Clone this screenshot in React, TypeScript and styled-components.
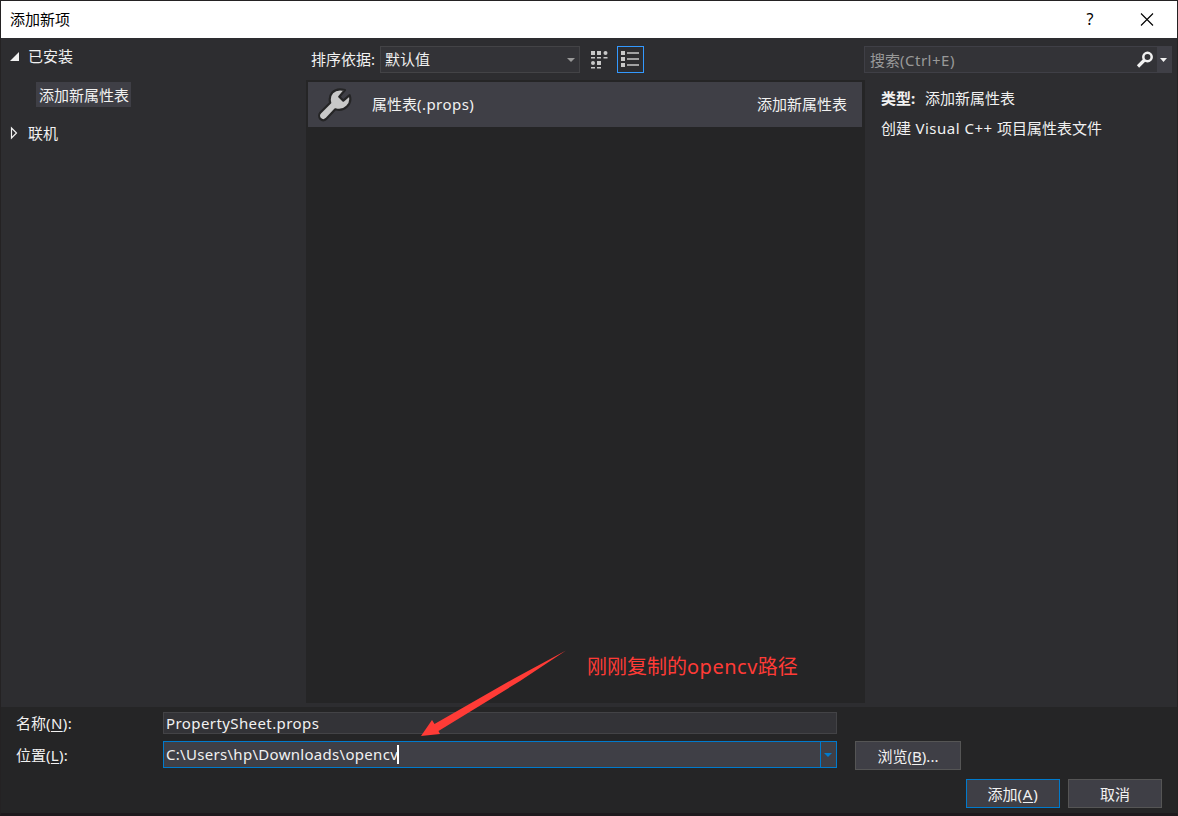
import React from "react";
import styled, { createGlobalStyle } from "styled-components";

const GlobalStyle = createGlobalStyle`
  * { box-sizing: border-box; }
  body {
    margin: 0;
    background: #1f1b1e;
    color: #f1f1f1;
    font-family: "Noto Sans", "Noto Sans CJK SC", sans-serif;
    font-size: 15px;
    line-height: 20px;
    overflow: hidden;
  }
  button, input { font: inherit; color: inherit; }
`;

const Window = styled.div`
  width: 1178px;
  height: 816px;
  display: flex;
  flex-direction: column;
  border: 1px solid #242223;
  border-bottom: 3px solid #1e1a1d;
  background: #2d2d30;
  position: relative;
`;

const TitleBar = styled.header`
  height: 37px;
  flex: none;
  display: flex;
  align-items: center;
  padding: 0 23px 0 9px;
  background: #fff;
  color: #000;
`;

const Title = styled.h1`
  flex: 1;
  margin: 0 0 2px;
  font-size: 15px;
  font-weight: 400;
  line-height: 20px;
`;

const HelpMark = styled.span`
  width: 10px;
  margin: 0 45px 2px 0;
  font-size: 16px;
  text-align: center;
`;

const Body = styled.main`
  height: 669px;
  flex: none;
  display: grid;
  grid-template-columns: 305px 559px 1fr;
`;

const Tree = styled.nav`
  display: flex;
  flex-direction: column;
  padding-top: 8px;
`;

const TreeRow = styled.div`
  height: 20px;
  display: flex;
  align-items: center;
  padding-left: 8px;
  gap: 6px;
`;

const TreeArrow = styled.svg`
  width: 13px;
  height: 14px;
  flex: none;
`;

const TreeItem = styled.div`
  width: 95px;
  height: 25px;
  margin: 16px 0 16px 35px;
  padding-left: 3px;
  line-height: 27px;
  background: #3f3f46;
  white-space: nowrap;
`;

const Center = styled.section`
  display: flex;
  flex-direction: column;
`;

const Toolbar = styled.div`
  height: 42px;
  flex: none;
  display: flex;
  align-items: flex-start;
  padding: 8px 0 0 5px;
`;

const SortLabel = styled.span`
  width: 69px;
  line-height: 26px;
  white-space: nowrap;
`;

const SortSelect = styled.div`
  width: 200px;
  height: 27px;
  display: flex;
  align-items: center;
  justify-content: space-between;
  padding: 0 4px 0 4px;
  line-height: 20px;
  background: #333337;
  border: 1px solid #434346;
`;

const SortValue = styled.span`
  margin-bottom: 2px;
`;

const ViewButton = styled.button<{ $active?: boolean }>`
  width: 27px;
  height: 27px;
  margin-left: ${(p) => (p.$active ? 4 : 6)}px;
  padding: 0;
  display: grid;
  place-items: center;
  background: transparent;
  border: 1px solid ${(p) => (p.$active ? "#3399ff" : "transparent")};
`;

const TemplateList = styled.div`
  height: 623px;
  padding: 2px 3px 0 2px;
  background: #252526;
`;

const TemplateRow = styled.div`
  height: 45px;
  display: flex;
  align-items: center;
  padding: 0 15px 0 10px;
  background: #3f3f46;
`;

const TemplateName = styled.span`
  flex: 1;
  margin: 0 0 2px 20px;
`;

const TemplateKind = styled.span`
  margin-bottom: 2px;
`;

const Latin = styled.span<{ $track: number }>`
  letter-spacing: ${(p) => p.$track}px;
`;

const Details = styled.aside`
  display: flex;
  flex-direction: column;
  padding: 8px 5px 0 0;
`;

const Search = styled.div`
  width: 308px;
  height: 27px;
  margin-left: -1px;
  display: flex;
  background: #333337;
  border: 1px solid #3f3f46;
`;

const SearchHint = styled.span`
  flex: 1;
  padding-left: 5px;
  line-height: 27px;
  color: #999;
`;

const SearchIcon = styled.svg`
  width: 18px;
  height: 18px;
  margin: 4px 3px 0 0;
`;

const SearchDrop = styled.div`
  width: 14px;
  padding-right: 2px;
  display: grid;
  place-items: center;
  background: #3f3f46;
`;

const DetailLine = styled.p<{ $top: number }>`
  margin: ${(p) => p.$top}px 0 0 16px;
  height: 20px;
  white-space: nowrap;
`;

const DetailKey = styled.b`
  display: inline-block;
  width: 44px;
`;

const Footer = styled.footer`
  flex: 1;
  padding: 5px 15px 0 15px;
  background: #252526;
`;

const FieldRow = styled.div<{ $height: number }>`
  height: ${(p) => p.$height}px;
  display: flex;
  align-items: flex-start;
`;

const FieldLabel = styled.label<{ $line: number }>`
  width: 147px;
  line-height: ${(p) => p.$line}px;
`;

const Field = styled.div<{ $focused?: boolean }>`
  width: 674px;
  height: ${(p) => (p.$focused ? 27 : 22)}px;
  display: flex;
  align-items: center;
  padding-left: 2px;
  background: ${(p) => (p.$focused ? "#3f3f46" : "#333337")};
  border: 1px solid ${(p) => (p.$focused ? "#007acc" : "#434346")};
`;

const FieldValue = styled.span<{ $track: number; $lift?: number }>`
  margin-bottom: ${(p) => p.$lift ?? 0}px;
  letter-spacing: ${(p) => p.$track}px;
  white-space: nowrap;
`;

const Caret = styled.i`
  width: 2px;
  height: 19px;
  margin-left: -1px;
  background: #fff;
`;

const FieldDrop = styled.div`
  width: 16px;
  height: 25px;
  margin-left: auto;
  padding-right: 1px;
  display: grid;
  place-items: center;
  border-left: 1px solid #007acc;
`;

const PushButton = styled.button<{ $width: number; $primary?: boolean }>`
  width: ${(p) => p.$width}px;
  height: 29px;
  padding: 0;
  line-height: 20px;
  background: #3f3f46;
  border: 1px solid ${(p) => (p.$primary ? "#007acc" : "#555")};
`;

const BrowseSlot = styled.div`
  margin-left: 18px;
`;

const Actions = styled.div`
  display: flex;
  justify-content: flex-end;
  gap: 8px;
`;

const AccessKey = styled.span`
  text-decoration: underline;
  text-underline-offset: 2px;
  text-decoration-thickness: 1px;
`;

const NoteArrow = styled.svg`
  position: absolute;
  left: 419px;
  top: 649px;
  width: 148px;
  height: 90px;
`;

const NoteText = styled.div`
  position: absolute;
  left: 586px;
  top: 651px;
  font-size: 20px;
  line-height: 30px;
  color: #ff3b36;
  white-space: nowrap;
`;

const Chevron = ({ color, w = 8, h = 4 }: { color: string; w?: number; h?: number }) => (
  <svg width={w} height={h} viewBox="0 0 8 4" preserveAspectRatio="none">
    <path d="M0 0h8L4 4z" fill={color} />
  </svg>
);

const TilesIcon = () => (
  <svg width="18" height="19" viewBox="0 0 18 19" fill="#c8c8c8">
    <path d="M0 1h4v4H0zM6 1h4v4H6zM0 7h4v1.500H0zM6 7h4v1.500H6zM12.500 7h4v1.500h-4zM6 11h4v4H6zM0 17h4v1.500H0zM6 17h4v1.500H6z" />
    <circle cx="14.500" cy="3" r="2" />
    <circle cx="2" cy="13" r="2" />
  </svg>
);

const DetailsIcon = () => (
  <svg width="19" height="19" viewBox="0 0 19 19" fill="#c8c8c8">
    <path d="M0 1h4v4H0zM0 7h4v4H0zM0 13h4v4H0zM6 2.200h12v1.600H6zM6 8.200h12v1.600H6zM6 14.200h12v1.600H6z" />
  </svg>
);

const WrenchIcon = () => (
  <svg width="34" height="34" viewBox="0 0 34 34">
    <path
      d="M27 2C22.500 .8 17.500 1 14.300 4.500C11.700 7.400 11.200 11 12.200 14.800L2.200 24.800C.8 26.300 .8 29.200 2.300 30.900C4 32.500 6.500 32.500 8.200 30.900L17.300 21.300C21 22.500 25.800 21.700 29 18.500C32.400 15.200 33 11 31.600 7.200L25.300 12.600L21.300 8.800Z"
      fill="#c8c8c8"
      stroke="#252526"
      strokeWidth="2.200"
      strokeLinejoin="round"
    />
  </svg>
);

export default function App() {
  return (
    <>
      <GlobalStyle />
      <Window>
        <TitleBar>
          <Title>添加新项</Title>
          <HelpMark>?</HelpMark>
          <svg width="14" height="14" viewBox="0 0 14 14">
            <path d="M1 .5l12 12M13 .5L1 12.500" stroke="#000" strokeWidth="1.100" />
          </svg>
        </TitleBar>

        <Body>
          <Tree>
            <TreeRow>
              <TreeArrow viewBox="0 0 13 14">
                <path d="M10 3v9H1z" fill="#f1f1f1" />
              </TreeArrow>
              已安装
            </TreeRow>
            <TreeItem>添加新属性表</TreeItem>
            <TreeRow>
              <TreeArrow viewBox="0 0 13 14">
                <path d="M2.500 2v10l5-5z" fill="none" stroke="#f1f1f1" strokeWidth="1.200" />
              </TreeArrow>
              联机
            </TreeRow>
          </Tree>

          <Center>
            <Toolbar>
              <SortLabel>排序依据:</SortLabel>
              <SortSelect>
                <SortValue>默认值</SortValue>
                <Chevron color="#999" />
              </SortSelect>
              <ViewButton aria-label="图标">
                <TilesIcon />
              </ViewButton>
              <ViewButton $active aria-label="列表">
                <DetailsIcon />
              </ViewButton>
            </Toolbar>
            <TemplateList>
              <TemplateRow>
                <WrenchIcon />
                <TemplateName>
                  属性表<Latin $track={0.45}>(.props)</Latin>
                </TemplateName>
                <TemplateKind>添加新属性表</TemplateKind>
              </TemplateRow>
            </TemplateList>
          </Center>

          <Details>
            <Search>
              <SearchHint>
                搜索<Latin $track={0.5}>(Ctrl+E)</Latin>
              </SearchHint>
              <SearchIcon viewBox="0 0 18 18" fill="none" stroke="#f1f1f1">
                <circle cx="11.500" cy="6" r="4.200" strokeWidth="2.500" />
                <path d="M8.500 9L2 15.500" strokeWidth="3.200" />
              </SearchIcon>
              <SearchDrop>
                <Chevron color="#f1f1f1" w={7} h={4} />
              </SearchDrop>
            </Search>
            <DetailLine $top={15}>
              <DetailKey>类型:</DetailKey>添加新属性表
            </DetailLine>
            <DetailLine $top={10}>
              创建<Latin $track={0.5}> Visual C++ </Latin>项目属性表文件
            </DetailLine>
          </Details>
        </Body>

        <Footer>
          <FieldRow $height={29}>
            <FieldLabel $line={23}>
              名称
              <Latin $track={0.4}>
                (<AccessKey>N</AccessKey>):
              </Latin>
            </FieldLabel>
            <Field>
              <FieldValue $track={0.41}>PropertySheet.props</FieldValue>
            </Field>
          </FieldRow>
          <FieldRow $height={38}>
            <FieldLabel $line={29}>
              位置
              <Latin $track={0.3}>
                (<AccessKey>L</AccessKey>):
              </Latin>
            </FieldLabel>
            <Field $focused>
              <FieldValue $track={0.3} $lift={2}>
                C:\Users\hp\Downloads\opencv
              </FieldValue>
              <Caret />
              <FieldDrop>
                <Chevron color="#007acc" />
              </FieldDrop>
            </Field>
            <BrowseSlot>
              <PushButton $width={106}>
                浏览(<AccessKey>B</AccessKey>)...
              </PushButton>
            </BrowseSlot>
          </FieldRow>
          <Actions>
            <PushButton $width={94} $primary>
              添加
              <Latin $track={0.8}>
                (<AccessKey>A</AccessKey>)
              </Latin>
            </PushButton>
            <PushButton $width={94}>取消</PushButton>
          </Actions>
        </Footer>

        <NoteArrow viewBox="420 650 148 90">
          <path d="M566 650.500L520 681L438.500 731L440 734L421 736L432 720L434.500 724L515 678Z" fill="#ff3b36" />
        </NoteArrow>
        <NoteText>
          刚刚复制的<Latin $track={0.5}>opencv</Latin>路径
        </NoteText>
      </Window>
    </>
  );
}
